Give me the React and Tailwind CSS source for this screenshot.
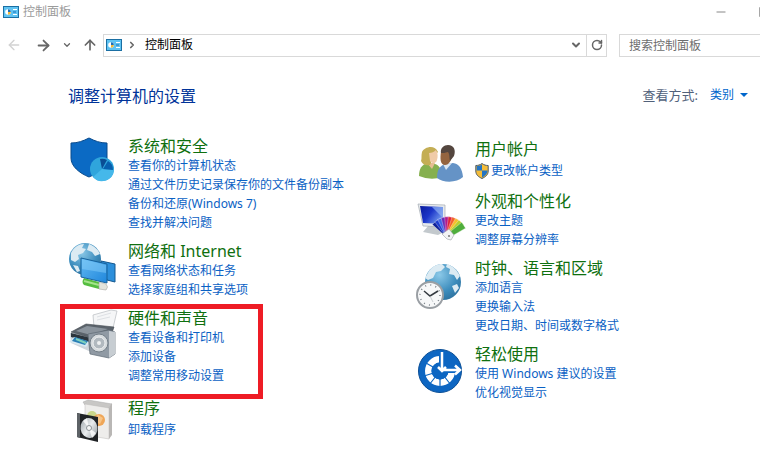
import { ArrowLeft, ArrowRight, ArrowUp, ChevronDown, ChevronRight, Minus, RotateCw, Square } from "lucide-react";

function PanelIcon() {
  return (
    <svg viewBox="0 0 16 12" className="h-3 w-4 shrink-0">
      <rect width="16" height="12" fill="#1b6fa3" />
      <rect x="1" y="1" width="14" height="10" fill="#5fc3f2" />
      <circle cx="5" cy="6" r="2.8" fill="#fff" />
      <path d="M5 6V3.2A2.8 2.8 0 0 1 7.8 6z" fill="#1c6fb8" />
      <path d="M5 6h2.8A2.8 2.8 0 0 1 5 8.8z" fill="#f0b93c" />
      <path d="M10 3.500h4M10 8.500h4" stroke="#fff" />
      <path d="M10 6h3" stroke="#1c6fb8" />
    </svg>
  );
}

function SecurityIcon() {
  return (
    <>
      <path d="M3 7c7 0 12-2 18-5 6 3 11 5 18 5v15c0 8-8 15-18 19C11 37 3 30 3 22z" fill="#0b6ac4" stroke="#084a8c" />
      <circle cx="34" cy="33" r="12" fill="#2fa5dc" />
      <path d="M34 33 46 34a12 12 0 0 1-21 7z" fill="#45b8ea" />
      <path d="m34 33-2-10a10 10 0 0 1 7 1z" fill="#0a4d94" />
      <path d="m35 33 5-8a10 10 0 0 1 5 9z" fill="#075fae" />
    </>
  );
}

function NetworkIcon() {
  return (
    <>
      <circle cx="17" cy="18" r="16" fill="url(#globe)" />
      <path d="M3 12c3-6 8-9 13-9l-2 4 4 1-3 4-5 2 1 4-4 3-4-2zM21 3c5 2 9 5 11 10l-5 2-3-4-5-2zM5 24l5 1 2 5-3 1z" fill="#dcebf3" />
      <path d="m33 20 14 3v18l-8-2z" fill="#2c8fdb" stroke="#15588f" />
      <path d="m16 37 15 4v7l-15-4q-3-3 0-7z" fill="#55bd3f" />
      <path d="m16 40 15 4" stroke="#a6e38b" strokeWidth="2" />
      <path d="m31 41 7 2q3 3 0 6l-7-1z" fill="#e3e4dc" stroke="#a9aaa2" strokeWidth=".6" />
      <path d="m13 17 26 6v19l-26-6z" fill="url(#screen)" stroke="#17629c" />
      <path d="m14 18 24 6v8l-24-4z" fill="#8dd3fa" opacity=".45" />
    </>
  );
}

function HardwareIcon() {
  return (
    <>
      <path d="m25 7 18-5 6 1-4 17-19-1z" fill="#f5f6f7" stroke="#b7bbc0" strokeWidth=".7" />
      <path d="m29 9 14-4m-14 7 13-3" stroke="#dde0e4" />
      <path d="m2 25 1 10 20 9 8-7V25z" fill="#cfd6dc" />
      <path d="m3 24 15-8 28 3-2 6-21 5z" fill="#5b636b" stroke="#454b52" strokeWidth=".6" />
      <path d="m8 23 11-5 21 3-17 6z" fill="#8b949d" />
      <path d="m3 25 20 5v5L3 29z" fill="#2c353d" />
      <path d="m6 29 16 5-4 5-17-5z" fill="#d8e9f2" />
      <path d="m7 29 13 4-3 4-13-4z" fill="#297fb6" />
      <path d="m8 31 10 4" stroke="#7fd1bd" strokeWidth="2" />
      <path d="m20 26 21-4 6 2v22l-6 4-19-4z" fill="#909aa4" stroke="#5f6a74" strokeWidth=".7" />
      <path d="m41 23 6 1v22l-6 4z" fill="#c7cdd2" />
      <circle cx="31" cy="35" r="9" fill="#d5dadd" stroke="#737e87" />
      <circle cx="31" cy="35" r="6" fill="#b1b9bf" stroke="#eef0f1" />
      <circle cx="31" cy="35" r="2" fill="#eef0f1" />
    </>
  );
}

function ProgramsIcon() {
  return (
    <>
      <path d="m15 4 5-2 24 4-3 4-24-3z" fill="#c8c7c5" stroke="#aaa" strokeWidth=".5" />
      <path d="m17 6 24 4v31l-24-4z" fill="#eeedeb" stroke="#bcbbb9" strokeWidth=".5" />
      <path d="m41 10 3-5v32l-3 4z" fill="#b9b7b5" />
      <circle cx="24" cy="18" r="5" fill="#cad68b" />
      <circle cx="31" cy="22" r="6" fill="#efa657" />
      <path d="m26 20 4-3 5 3-3 6-5-2z" fill="#f7c487" />
      <path d="m9 15 21 4v25L9 39z" fill="#202326" />
      <path d="m9 15 3 1v24l-3-1z" fill="#5d6266" />
      <ellipse cx="21" cy="30" rx="8.500" ry="10" fill="url(#disc)" transform="rotate(-8 21 30)" />
      <path d="m21 30-6-7 4-3zM21 30l7 5-4 5z" fill="#fff" opacity=".8" />
      <circle cx="21" cy="30" r="2.500" fill="#f7f8f8" stroke="#8c9296" />
    </>
  );
}

function UsersIcon() {
  return (
    <>
      <path d="M4 37c0-8 3-11 8-13l8 1c4 1 6 4 7 13q-11 4-23-1z" fill="#86b04f" />
      <path d="m12 24 5 6 3-6z" fill="#e7bd92" />
      <path d="M6 22c1-3 0-5 1-9 2-5 13-8 16 0l-4 4-4 9c-4 1-7 0-9-4z" fill="#c4ae55" />
      <path d="M14 14c3 0 5-1 7-3 2 3 2 7 1 10-1 4-5 4-7 1z" fill="#f0cba8" />
      <path d="M22 39c0-9 3-12 8-14l8-1c6 1 9 5 10 14-6 6-20 6-26 1z" fill="#6593c6" />
      <path d="m28 25 3 6 6-7z" fill="#dbe7f3" />
      <path d="M26 13c3-5 10-3 11 2 0 6-3 11-7 11-5 0-5-7-4-13z" fill="#94643f" />
      <path d="M26 14c-1-5 3-8 7-8 6 0 8 5 6 11l-4 5c-1-4 0-6-2-9-3 1-5 1-7 1z" fill="#54463f" />
    </>
  );
}

function AppearanceIcon() {
  const swatches = ["#10229a", "#1c3ccf", "#3f63e6", "#6a2bb5", "#b01a8c", "#e0233a", "#f2632a", "#f6c02c", "#b9cf2f", "#4fae3c"];
  return (
    <>
      <path d="M14 34h9l1 5 5 2-6 3-15-3z" fill="#c3c9cd" />
      <path d="m3 13 27 1v22l-22-1z" fill="#e6eaed" stroke="#a4abb1" strokeWidth=".7" />
      <path d="m5 15 23 1v17L8 32z" fill="url(#desktop)" />
      <path d="m17 16 11 0v11z" fill="#8fb2f4" opacity=".7" />
      {swatches.map((color, i) => (
        <path key={color} d="M31 45 29 26h7l-1 19z" fill={color} stroke="#fff" strokeWidth=".3" transform={`rotate(${i * 11 - 42} 33 45)`} />
      ))}
      <path d="m27 43 7-5 5 6-3 5-4-1z" fill="#f3f4f5" stroke="#9aa0a5" strokeWidth=".6" />
      <circle cx="34" cy="45" r="1" fill="#777" />
    </>
  );
}

function ClockIcon() {
  return (
    <>
      <circle cx="28" cy="24" r="18" fill="url(#globe)" />
      <path d="M14 13c4-5 8-7 13-7l3 3-4 4-5 1-3 6-5 2-3-2zM32 6c6 2 10 6 13 12l-3 4-3-5-5-1 1-5-4-2zM37 28l5-2 2 4-4 5z" fill="#dcebf3" />
      <circle cx="15" cy="37" r="13" fill="#f7f8f9" stroke="#9a9fa4" strokeWidth="2" />
      <circle cx="15" cy="37" r="10" fill="none" stroke="#7a8289" strokeWidth="1.500" strokeDasharray="1 4.236" />
      <path d="m9 33 6 5 8-5" fill="none" stroke="#343a40" strokeWidth="1.500" />
      <path d="m15 38 3 6" stroke="#b8bdc1" strokeWidth=".7" />
    </>
  );
}

function EaseIcon() {
  return (
    <>
      <circle cx="25" cy="27" r="21.500" fill="#0d66c2" stroke="#0a4e96" />
      <path d="M40 27A15 15 0 1 1 25 12v6.500A8.500 8.500 0 1 0 33.500 27z" fill="#fff" />
      <path d="M25 27v16M25 27 14 41M25 27 9 32M25 27 11 19M25 27 36 41" stroke="#0d66c2" strokeWidth="1.200" />
      <circle cx="25" cy="27" r="8.500" fill="#0d66c2" />
      <path d="M27 8v18M28 26h15" stroke="#0d66c2" strokeWidth="6" />
      <path d="M27 8v19M23 23l4 4 4-4" fill="none" stroke="#fff" strokeWidth="2.500" />
      <path d="M28 26h16M40 21.500l5 4.500-5 4.500" fill="none" stroke="#fff" strokeWidth="2.500" />
    </>
  );
}

function ShieldBadge() {
  return (
    <svg viewBox="0 0 14 16" className="h-4 w-3.5 shrink-0">
      <path d="M7 .5C5 2 3 2.500.8 2.500v5.500c0 4 3 6 6.200 7.500 3.200-1.500 6.200-3.500 6.200-7.500V2.500C11 2.500 9 2 7 .5z" fill="#f5bd3a" stroke="#4a5a68" />
      <path d="M7 1.500C5 2.600 3.500 3 1.700 3v4.500H7zM7 7.500h5.500c0 3.500-2.500 5.500-5.500 7z" fill="#2374c4" />
    </svg>
  );
}

const leftColumn = [
  { title: "系统和安全", Icon: SecurityIcon, links: ["查看你的计算机状态", "通过文件历史记录保存你的文件备份副本", "备份和还原(Windows 7)", "查找并解决问题"] },
  { title: "网络和 Internet", Icon: NetworkIcon, links: ["查看网络状态和任务", "选择家庭组和共享选项"] },
  { title: "硬件和声音", Icon: HardwareIcon, links: ["查看设备和打印机", "添加设备", "调整常用移动设置"], marked: true },
  { title: "程序", Icon: ProgramsIcon, links: ["卸载程序"], tall: true },
];

const rightColumn = [
  { title: "用户帐户", Icon: UsersIcon, links: ["更改帐户类型"], tall: true, shield: true },
  { title: "外观和个性化", Icon: AppearanceIcon, links: ["更改主题", "调整屏幕分辨率"] },
  { title: "时钟、语言和区域", Icon: ClockIcon, links: ["添加语言", "更换输入法", "更改日期、时间或数字格式"] },
  { title: "轻松使用", Icon: EaseIcon, links: ["使用 Windows 建议的设置", "优化视觉显示"] },
];

function Category({ title, Icon, links, marked, tall, shield }) {
  return (
    <section className={`relative flex items-start gap-3 ${marked ? "pb-1" : ""}`}>
      <svg viewBox="0 0 48 40" className="h-10 w-12 shrink-0 overflow-visible">
        <Icon />
      </svg>
      <div className="whitespace-nowrap">
        <h2 className="text-base leading-5">
          <a href="#" className="text-[#0f700f]">{title}</a>
        </h2>
        <ul>
          {links.map((link) => (
            <li key={link} className={tall ? "leading-[23px]" : "leading-[19px]"}>
              <a href="#" className="inline-flex items-center gap-0.5 align-top text-[#0a61c4]">
                {shield && <ShieldBadge />}
                {link}
              </a>
            </li>
          ))}
        </ul>
      </div>
      {marked && <div className="pointer-events-none absolute -top-1 -bottom-2.5 -left-2 w-[203px] border-[5px] border-[#ee1c25]" />}
    </section>
  );
}

export default function App() {
  return (
    <div className="min-h-screen overflow-hidden bg-white font-['Noto_Sans','Noto_Sans_CJK_SC',sans-serif] text-xs text-black">
      {/* shared fills for the category icons */}
      <svg className="absolute size-0" aria-hidden="true">
        <defs>
          <radialGradient id="globe" cx=".4" cy=".3" r=".8">
            <stop offset="0" stopColor="#8cc9e8" />
            <stop offset=".6" stopColor="#3d8dbd" />
            <stop offset="1" stopColor="#2a6c99" />
          </radialGradient>
          <linearGradient id="screen" x2="1" y2="1">
            <stop offset="0" stopColor="#62b9f2" />
            <stop offset="1" stopColor="#1f86dc" />
          </linearGradient>
          <linearGradient id="disc" x2="1" y2="1">
            <stop offset="0" stopColor="#9ba3a8" />
            <stop offset=".5" stopColor="#e9ecee" />
            <stop offset="1" stopColor="#8b9398" />
          </linearGradient>
          <linearGradient id="desktop" x2="1" y2=".6">
            <stop offset="0" stopColor="#0a1c9c" />
            <stop offset=".5" stopColor="#1b35c8" />
            <stop offset="1" stopColor="#6f97ee" />
          </linearGradient>
        </defs>
      </svg>

      <header className="flex h-6 items-center pl-[3px]">
        <PanelIcon />
        <h1 className="ml-1 flex-1 text-[#9b9b9b]">控制面板</h1>
        <button aria-label="最小化" className="mr-[30px] text-[#777]">
          <Minus size={14} strokeWidth={1.5} />
        </button>
        <button aria-label="最大化" className="-mr-3 text-[#777]">
          <Square size={14} strokeWidth={1.5} />
        </button>
      </header>

      <nav className="flex h-[42px] items-center pl-1.5 text-[#666]">
        <button aria-label="后退" className="text-[#d2d2d2]">
          <ArrowLeft size={16} />
        </button>
        <button aria-label="前进" className="ml-[13px]">
          <ArrowRight size={17} strokeWidth={2.5} />
        </button>
        <button aria-label="最近位置" className="ml-2.5">
          <ChevronDown size={10} strokeWidth={3} />
        </button>
        <button aria-label="向上" className="ml-2.5">
          <ArrowUp size={16} strokeWidth={2.5} />
        </button>
        <div className="ml-[5px] flex h-[23px] flex-1 items-center border border-[#d9d9d9] pl-0.5">
          <PanelIcon />
          <ChevronRight size={10} strokeWidth={4} className="ml-[5px]" />
          <a href="#" className="ml-2 flex-1 text-black">控制面板</a>
          <button aria-label="历史记录" className="px-1">
            <ChevronDown size={12} strokeWidth={4} />
          </button>
          <button aria-label="刷新" className="flex h-full w-5 items-center justify-center border-l border-[#d9d9d9]">
            <RotateCw size={12} strokeWidth={3} />
          </button>
        </div>
        <input
          type="search"
          aria-label="搜索控制面板"
          placeholder="搜索控制面板"
          className="ml-3 h-[23px] w-[141px] border border-r-0 border-[#d9d9d9] px-[9px] placeholder:text-[#6d6d6d]"
        />
      </nav>

      <main className="px-3">
        <div className="flex h-[59px] items-center justify-between pl-14">
          <h2 className="text-base text-[#003399]">调整计算机的设置</h2>
          <div className="flex items-center gap-3">
            <label htmlFor="view" className="text-[13px] text-[#51617a]">查看方式:</label>
            <div className="relative">
              <select id="view" className="appearance-none bg-transparent pr-[13px] text-[#0066cc]">
                <option>类别</option>
              </select>
              <svg viewBox="0 0 8 4" className="pointer-events-none absolute top-1/2 right-0 h-1 w-2 -translate-y-1/2">
                <path d="M0 0h8L4 4z" fill="#0066cc" />
              </svg>
            </div>
          </div>
        </div>
        <div className="grid grid-cols-[347px_1fr] pt-[11px] pl-14">
          <div className="flex flex-col gap-[9px]">
            {leftColumn.map((item) => <Category key={item.title} {...item} />)}
          </div>
          <div className="flex flex-col gap-[9px] pt-[3px]">
            {rightColumn.map((item) => <Category key={item.title} {...item} />)}
          </div>
        </div>
      </main>
    </div>
  );
}
